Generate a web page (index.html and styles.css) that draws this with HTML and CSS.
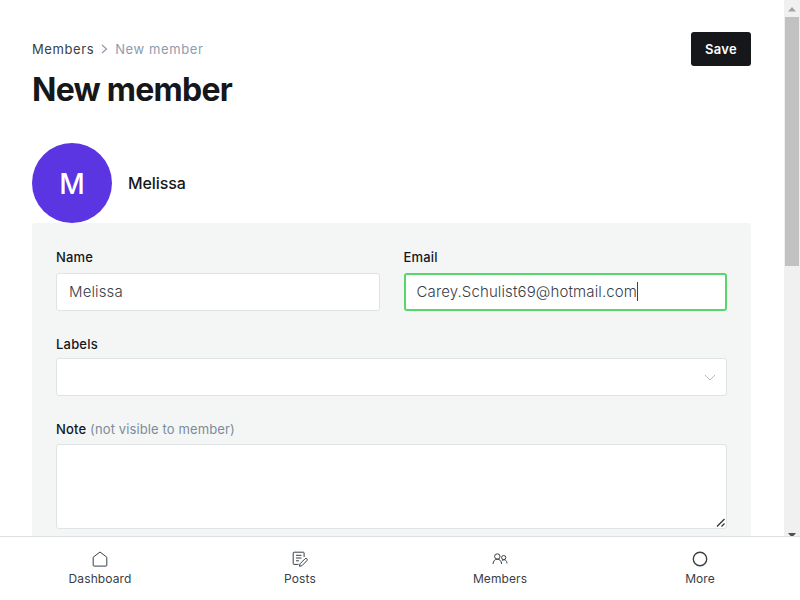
FILE: index.html
```html
<!DOCTYPE html>
<html lang="en">
<head>
<meta charset="utf-8">
<title>New member</title>
<link rel="stylesheet" href="styles.css">
</head>
<body>
<div class="viewport">
  <main class="content">
    <header class="header">
      <div>
        <nav class="crumbs">
          <span class="crumb-link">Members</span>
          <svg class="crumb-arrow" width="7" height="10" viewBox="0 0 7 10"><path d="M1 1l4.500 4L1 9"/></svg>
          <span>New member</span>
        </nav>
        <h1 class="title">New member</h1>
      </div>
      <button class="save">Save</button>
    </header>
    <section class="person">
      <div class="avatar"><span>M</span></div>
      <h3 class="person-name">Melissa</h3>
    </section>
    <form class="panel">
      <div class="row">
        <div class="field">
          <label class="label">Name</label>
          <div class="input">Melissa</div>
        </div>
        <div class="field">
          <label class="label">Email</label>
          <div class="input focused">Carey.Schulist69@hotmail.com<i class="caret"></i></div>
        </div>
      </div>
      <div class="field labels">
        <label class="label">Labels</label>
        <div class="input select"><svg width="12" height="8" viewBox="0 0 12 8"><path d="M1 1l5 5 5-5"/></svg></div>
      </div>
      <div class="field note">
        <label class="label">Note <span class="hint">(not visible to member)</span></label>
        <div class="input area"><svg width="10" height="10" viewBox="0 0 10 10"><path d="M1 8.500L8.500 1M5.500 8.500L8.500 5.500"/></svg></div>
      </div>
    </form>
  </main>
  <div class="scrollbar">
    <svg class="up" width="8" height="5" viewBox="0 0 8 5"><path d="M4 0l4 4.500H0z"/></svg>
    <div class="thumb"></div>
    <svg class="down" width="8" height="5" viewBox="0 0 8 5"><path d="M0 0h8L4 4.500z"/></svg>
  </div>
</div>
<nav class="tabs">
  <a class="tab">
    <svg width="16" height="16" viewBox="0 0 16 16"><path d="M1.200 6.200v8.200a.7.7 0 0 0 .7.7h12.200a.7.7 0 0 0 .7-.7V6.200L8 1z"/></svg>
    <span>Dashboard</span>
  </a>
  <a class="tab">
    <svg width="16" height="16" viewBox="0 0 16 16"><path d="M6.500 13.400H2a.8.8 0 0 1-.8-.8V2A.8.8 0 0 1 2 1.200h9.300a.8.8 0 0 1 .8.8v4M4 4.300h5.500M4 7h5.500M4 9.800h3M8 12.800l5-5a1.300 1.300 0 0 1 1.900 1.900l-5 5-2.500.6z"/></svg>
    <span>Posts</span>
  </a>
  <a class="tab">
    <svg width="16" height="16" viewBox="0 0 16 16"><circle cx="5.300" cy="5.500" r="2.700"/><circle cx="11.700" cy="6.600" r="2.100"/><path d="M1 13c.1-3 1.900-4.800 4.300-4.800S9.500 10 9.600 13M10 9.500c2.500-1.700 5-.2 5 3"/></svg>
    <span>Members</span>
  </a>
  <a class="tab">
    <svg class="more" width="16" height="16" viewBox="0 0 16 16"><circle cx="8" cy="8" r="6.700"/></svg>
    <span>More</span>
  </a>
</nav>
</body>
</html>
```
FILE: styles.css
```css
* { box-sizing: border-box; }

body {
  margin: 0;
  height: 600px;
  overflow: hidden;
  display: flex;
  flex-direction: column;
  background: #fff;
  color: #15171a;
  font-family: Inter, sans-serif;
}

svg { fill: none; stroke: currentColor; }

.viewport { display: flex; height: 536px; overflow: hidden; }
.content { flex: 1; padding: 32px 33px 0 32px; }

.header { display: flex; justify-content: space-between; align-items: flex-start; height: 111px; }

.crumbs {
  display: flex;
  align-items: center;
  height: 34px;
  font-size: 13px;
  letter-spacing: 0.6px;
  color: #8e9cac;
}
.crumb-link { color: #394047; }
.crumb-arrow { margin: 0 7px; stroke-width: 1.200; }

.title {
  margin: 4px 0 0;
  font-size: 32px;
  line-height: 40px;
  font-weight: 700;
  letter-spacing: -0.75px;
}

.save {
  width: 60px;
  height: 34px;
  margin: 0;
  padding: 0;
  border: 0;
  border-radius: 3px;
  background: #15171a;
  color: #fff;
  font: 600 13px/34px Inter, sans-serif;
  letter-spacing: 0.3px;
}

.person { display: flex; align-items: center; height: 80px; }
.avatar {
  width: 80px;
  height: 80px;
  border-radius: 50%;
  background: #5a35e1;
  color: #fff;
  font-size: 28px;
  font-weight: 500;
  line-height: 82px;
  text-align: center;
}
.person-name { margin: 0 0 0 16px; font-size: 16px; font-weight: 500; letter-spacing: -0.1px; }

.panel {
  height: 400px;
  padding: 24px;
  border-radius: 3px;
  background: #f4f6f6;
}
.row { display: grid; grid-template-columns: 1fr 1fr; gap: 24px; }
.label {
  display: block;
  height: 20px;
  margin-bottom: 6px;
  font-size: 13px;
  line-height: 21px;
  font-weight: 450;
  letter-spacing: 0.2px;
}
.hint { color: #7c8b9a; font-weight: 400; letter-spacing: 0.12px; }
.input {
  display: flex;
  align-items: center;
  height: 38px;
  padding: 0 12px 2px;
  border: 1px solid #dfe3e4;
  border-radius: 3px;
  background: #fff;
  color: #394047;
  font-size: 15px;
  font-weight: 300;
  letter-spacing: 0.12px;
}
.focused { border: 2px solid #57d66b; padding: 0 11px 2px; }
.caret { width: 1px; height: 19px; background: #394047; }
.labels { margin-top: 23px; }
.labels .label { margin-bottom: 4px; }
.select { justify-content: flex-end; padding: 2px 10px 0 0; color: #b3bac1; }
.note { margin-top: 23px; }
.note .label { margin-bottom: 5px; }
.area { height: 85px; align-items: flex-end; justify-content: flex-end; padding: 0; color: #333; }
.area svg { stroke-width: 1.300; }

.scrollbar {
  width: 16px;
  display: flex;
  flex-direction: column;
  align-items: center;
  background: #f0f0f0;
}
.scrollbar svg { flex: none; fill: #a3a3a3; stroke: none; }
.scrollbar .up { margin: 7px 0 5px; }
.thumb { flex: none; width: 14px; height: 249px; background: #c1c1c1; }
.scrollbar .down { margin-top: 267px; fill: #505050; }

.tabs { display: flex; height: 64px; border-top: 1px solid #dce1e5; background: #fff; }
.tab {
  flex: 1;
  display: flex;
  flex-direction: column;
  align-items: center;
  padding-top: 14px;
  color: #394047;
  font-size: 12px;
  line-height: 20px;
  letter-spacing: 0.1px;
}
.tab span { margin-top: 2px; }
.more { stroke-width: 1.400; }
```
